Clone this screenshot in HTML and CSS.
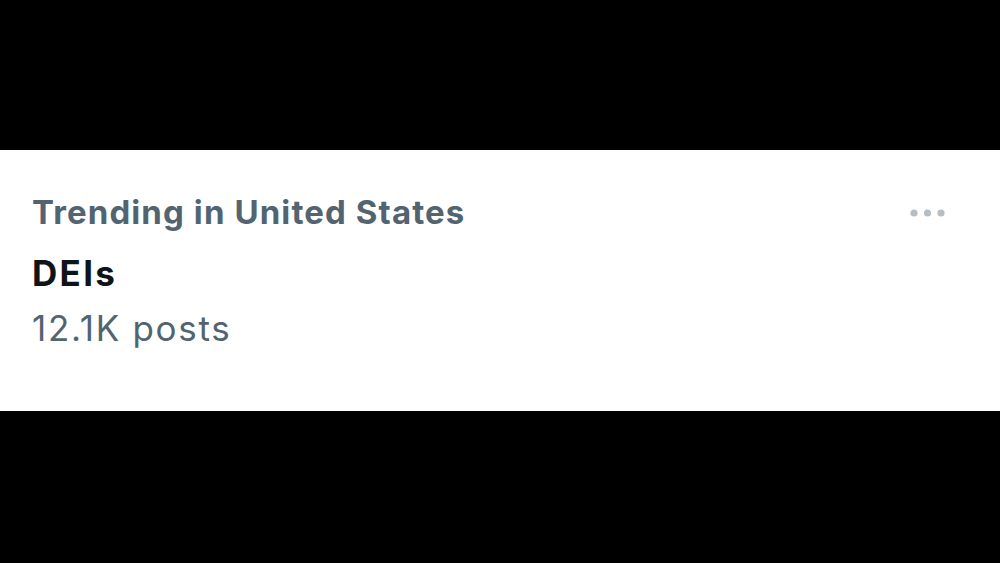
FILE: index.html
```html
<!DOCTYPE html>
<html lang="en">
<head>
<meta charset="utf-8">
<title>Trending</title>
<link rel="stylesheet" href="styles.css">
</head>
<body>
<div class="screen">
  <div class="trend">
    <div class="trend-text">
      <div class="context">Trending in United States</div>
      <div class="topic">DEIs</div>
      <div class="count">12.1K posts</div>
    </div>
    <div class="more" aria-label="More">
      <svg width="35" height="8" viewBox="0 0 35 8"><circle cx="4" cy="4" r="3.6"/><circle cx="17.5" cy="4" r="3.6"/><circle cx="31" cy="4" r="3.6"/></svg>
    </div>
  </div>
</div>
</body>
</html>
```
FILE: styles.css
```css
html, body {
  margin: 0;
  padding: 0;
  background: #000;
}
.screen {
  width: 1000px;
  height: 563px;
  padding-top: 150px;
  box-sizing: border-box;
}
.trend {
  background: #fff;
  height: 261px;
  box-sizing: border-box;
  padding: 42px 55px 0 32px;
  display: flex;
  justify-content: space-between;
  align-items: flex-start;
  font-family: Inter, "Noto Sans", sans-serif;
}
.trend-text {
  display: flex;
  flex-direction: column;
  white-space: nowrap;
}
.context {
  font-size: 33px;
  line-height: 40px;
  font-weight: 700;
  letter-spacing: 1.1px;
  color: #536471;
}
.topic {
  margin-top: 21px;
  font-size: 35px;
  line-height: 40px;
  font-weight: 700;
  letter-spacing: 2.3px;
  color: #0f1419;
}
.count {
  margin-top: 15px;
  font-size: 35px;
  line-height: 40px;
  font-weight: 400;
  letter-spacing: 1.7px;
  color: #536471;
}
.more {
  margin-top: 17px;
  display: flex;
}
.more svg {
  fill: #b7bec3;
}
```
